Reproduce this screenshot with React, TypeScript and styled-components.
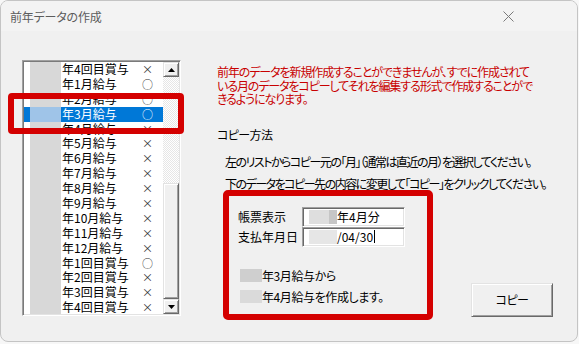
import React from "react";
import styled, { createGlobalStyle } from "styled-components";

const Global = createGlobalStyle`
  html, body { margin: 0; padding: 0; background: #f7f7f7; }
  body { font-family: "Noto Sans CJK JP", "Noto Sans", sans-serif; }
  #root { width: 579px; height: 344px; }
`;

const Window = styled.div`
  position: relative;
  box-sizing: border-box;
  width: 578px;
  height: 342px;
  border: 1px solid #c4c4c4;
  border-radius: 8px;
  background: #f0f0f0;
  overflow: hidden;
  display: flex;
  flex-direction: column;
`;

const TitleBar = styled.div`
  height: 30px;
  flex: none;
  display: flex;
  align-items: center;
  justify-content: space-between;
  padding: 0 63px 0 9px;
  background: #f3f3f3;
`;

const TitleText = styled.div`
  font-size: 12px;
  color: #5c5c5c;
  font-feature-settings: "palt";
  letter-spacing: -0.2px;
`;

const CloseIcon = () => (
  <svg width="11" height="11" viewBox="0 0 11 11">
    <path d="M0.5 0.5 L10.5 10.5 M10.5 0.5 L0.5 10.5" stroke="#7a7a7a" strokeWidth="1" fill="none" />
  </svg>
);

const Body = styled.div`
  flex: 1;
  display: flex;
  align-items: flex-start;
  padding: 29px 0 0 21px;
`;

const ListBox = styled.div`
  box-sizing: border-box;
  width: 159px;
  height: 256px;
  flex: none;
  display: flex;
  border-style: solid;
  border-width: 1px;
  border-color: #a0a0a0 #ffffff #ffffff #a0a0a0;
  box-shadow: inset 1px 1px #7a7a7a, inset -1px -1px #e3e3e3;
  padding: 1px;
  background: #fff;
`;

const Rows = styled.div`
  width: 139px;
  height: 100%;
  overflow: hidden;
  background: #fff;
`;

const Row = styled.div<{ $sel?: boolean }>`
  display: grid;
  grid-template-columns: 6px 31px 81px 1fr;
  height: 14.9px;
  line-height: 14.9px;
  font-size: 12px;
  color: ${(p) => (p.$sel ? "#fff" : "#000")};
  background: ${(p) => (p.$sel ? "#0078d7" : "transparent")};
  white-space: nowrap;
`;

const Redact = styled.span<{ $sel?: boolean }>`
  background: ${(p) => (p.$sel ? "#9fc4e8" : "#d8d8d8")};
`;

const Label = styled.span`
  padding-left: 1px;
`;

const Mark = styled.span<{ $sel?: boolean }>`
  font-size: 11px;
  color: ${(p) => (p.$sel ? "#fff" : "#333")};
`;

const ScrollBar = styled.div`
  width: 16px;
  height: 100%;
  display: flex;
  flex-direction: column;
`;

const ArrowButton = styled.div`
  box-sizing: border-box;
  height: 15px;
  flex: none;
  display: flex;
  align-items: center;
  justify-content: center;
  background: #f0f0f0;
  border-style: solid;
  border-width: 1px;
  border-color: #e3e3e3 #696969 #696969 #e3e3e3;
  box-shadow: inset 1px 1px #fff, inset -1px -1px #a0a0a0;
`;

const Track = styled.div`
  flex: 1;
  background: repeating-conic-gradient(#ffffff 0 25%, #e6e6e6 0 50%) 0 0 / 2px 2px;
`;

const Thumb = styled.div`
  box-sizing: border-box;
  height: 116px;
  flex: none;
  background: #f0f0f0;
  border-style: solid;
  border-width: 1px;
  border-color: #e3e3e3 #696969 #696969 #e3e3e3;
  box-shadow: inset 1px 1px #fff, inset -1px -1px #a0a0a0;
`;

const Arrow = ({ up }: { up?: boolean }) => (
  <svg width="7" height="4" viewBox="0 0 7 4">
    <path d={up ? "M0 4 L3.5 0 L7 4 Z" : "M0 0 L7 0 L3.5 4 Z"} fill="#000" />
  </svg>
);

const RightPane = styled.div`
  margin-left: 36px;
  padding-top: 5px;
  display: flex;
  flex-direction: column;
  font-feature-settings: "palt";
`;

const Notice = styled.div`
  font-size: 12px;
  line-height: 13.5px;
  color: #c80000;
  white-space: nowrap;
  letter-spacing: -1.1px;
`;

const SectionTitle = styled.div`
  margin-top: 22px;
  font-size: 12px;
  line-height: 14px;
  color: #000;
  letter-spacing: -0.6px;
`;

const Instructions = styled.div`
  margin-top: 9px;
  margin-left: 8px;
  font-size: 12px;
  line-height: 22px;
  color: #000;
  white-space: nowrap;
  letter-spacing: -1.5px;
`;

const BottomRow = styled.div`
  margin-top: -5px;
  display: flex;
  align-items: flex-end;
`;

const HighlightBox = styled.div`
  box-sizing: border-box;
  margin-left: 6px;
  width: 210px;
  height: 130px;
  border: 6px solid #d40000;
  border-radius: 5px;
  padding: 11px 0 0 9px;
  display: flex;
  flex-direction: column;
`;

const FormRow = styled.div`
  display: flex;
  align-items: center;
  height: 20px;
`;

const FieldLabel = styled.div`
  width: 64px;
  font-size: 12px;
  color: #000;
  font-feature-settings: normal;
`;

const Field = styled.div`
  box-sizing: border-box;
  width: 103px;
  height: 20px;
  display: flex;
  align-items: center;
  padding-left: 6px;
  background: #fff;
  border-style: solid;
  border-width: 1px;
  border-color: #a0a0a0 #ffffff #ffffff #a0a0a0;
  box-shadow: inset 1px 1px #696969, inset -1px -1px #e3e3e3;
  font-size: 12px;
  color: #000;
  font-feature-settings: normal;
`;

const FieldRedact = styled.span<{ $tone: string }>`
  width: 28px;
  height: 14px;
  background: ${(p) => p.$tone};
  flex: none;
`;

const Caret = styled.span`
  width: 1px;
  height: 13px;
  background: #000;
  margin-left: 1px;
`;

const Summary = styled.div`
  margin-top: 18px;
  margin-left: 2px;
  display: flex;
  flex-direction: column;
`;

const SummaryLine = styled.div`
  height: 21px;
  display: flex;
  align-items: center;
  font-size: 12px;
  color: #000;
  letter-spacing: -0.4px;
`;

const SummaryRedact = styled.span<{ $tone: string }>`
  width: 22px;
  height: 13px;
  background: ${(p) => p.$tone};
  flex: none;
`;

const CopyButton = styled.div`
  box-sizing: border-box;
  margin-left: 38px;
  margin-bottom: 3px;
  width: 82px;
  height: 34px;
  display: flex;
  align-items: center;
  justify-content: center;
  font-size: 12px;
  color: #000;
  background: #f0f0f0;
  border-style: solid;
  border-width: 1px;
  border-color: #e3e3e3 #696969 #696969 #e3e3e3;
  box-shadow: inset 1px 1px #fff, inset -1px -1px #a0a0a0;
  letter-spacing: -0.5px;
`;

const Annotation = styled.div`
  position: absolute;
  left: 7px;
  top: 92px;
  width: 176px;
  height: 41px;
  box-sizing: border-box;
  border: 6px solid #d40000;
  border-radius: 4px;
  pointer-events: none;
`;

const items: [string, string][] = [
  ["年4回目賞与", "×"],
  ["年1月給与", "○"],
  ["年2月給与", "○"],
  ["年3月給与", "○"],
  ["年4月給与", "×"],
  ["年5月給与", "×"],
  ["年6月給与", "×"],
  ["年7月給与", "×"],
  ["年8月給与", "×"],
  ["年9月給与", "×"],
  ["年10月給与", "×"],
  ["年11月給与", "×"],
  ["年12月給与", "×"],
  ["年1回目賞与", "○"],
  ["年2回目賞与", "×"],
  ["年3回目賞与", "×"],
  ["年4回目賞与", "×"],
];

export default function App() {
  return (
    <>
      <Global />
      <Window>
        <TitleBar>
          <TitleText>前年データの作成</TitleText>
          <CloseIcon />
        </TitleBar>
        <Body>
          <ListBox>
            <Rows>
              {items.map(([t, m], i) => (
                <Row key={i} $sel={i === 3}>
                  <span />
                  <Redact $sel={i === 3} />
                  <Label>{t}</Label>
                  <Mark $sel={i === 3}>{m}</Mark>
                </Row>
              ))}
            </Rows>
            <ScrollBar>
              <ArrowButton>
                <Arrow up />
              </ArrowButton>
              <Track />
              <Thumb />
              <ArrowButton>
                <Arrow />
              </ArrowButton>
            </ScrollBar>
          </ListBox>
          <RightPane>
            <Notice>
              前年のデータを新規作成することができませんが、すでに作成されて
              <br />
              いる月のデータをコピーしてそれを編集する形式で作成することがで
              <br />
              きるようになります。
            </Notice>
            <SectionTitle>コピー方法</SectionTitle>
            <Instructions>
              左のリストからコピー元の「月」（通常は直近の月）を選択してください。
              <br />
              下のデータをコピー先の内容に変更して「コピー」をクリックしてください。
            </Instructions>
            <BottomRow>
              <HighlightBox>
                <FormRow>
                  <FieldLabel>帳票表示</FieldLabel>
                  <Field>
                    <FieldRedact $tone="linear-gradient(90deg, #dedede 0 70%, #c6c6c6 70%)" />
                    <span>年4月分</span>
                  </Field>
                </FormRow>
                <FormRow>
                  <FieldLabel>支払年月日</FieldLabel>
                  <Field>
                    <FieldRedact $tone="#e6e6e6" />
                    <span>/04/30</span>
                    <Caret />
                  </Field>
                </FormRow>
                <Summary>
                  <SummaryLine>
                    <SummaryRedact $tone="#cfcfcf" />
                    <span>年3月給与から</span>
                  </SummaryLine>
                  <SummaryLine>
                    <SummaryRedact $tone="#dadada" />
                    <span>年4月給与を作成します。</span>
                  </SummaryLine>
                </Summary>
              </HighlightBox>
              <CopyButton>コピー</CopyButton>
            </BottomRow>
          </RightPane>
        </Body>
        <Annotation />
      </Window>
    </>
  );
}
